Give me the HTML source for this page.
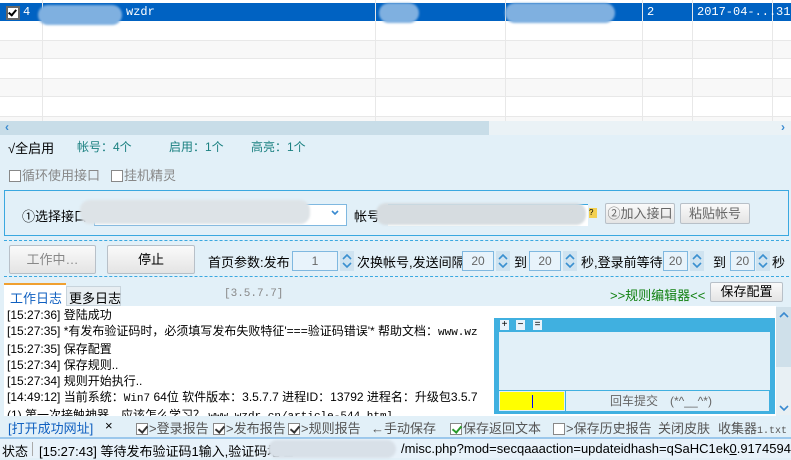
<!DOCTYPE html>
<html><head><meta charset="utf-8"><style>
*{margin:0;padding:0;box-sizing:border-box}
body{width:791px;height:458px;overflow:hidden;background:#e2f0f8;font-family:"Liberation Sans","Noto Sans CJK SC",sans-serif;font-size:12px;color:#000;position:relative}
.a{position:absolute;white-space:nowrap}
.mono{font-family:"Liberation Mono","Noto Sans CJK SC",monospace}
.btn{position:absolute;background:linear-gradient(#fafafa,#e4e4e4);border:1px solid #b8c0c8;border-radius:2px;text-align:center;font-size:13px}
.cb{display:inline-block;width:12px;height:12px;border:1px solid #888;background:#fff;vertical-align:-2px;margin-right:1px;position:relative}
.cb.c::after{content:"";position:absolute;left:3px;top:0px;width:4px;height:7px;border:solid #333;border-width:0 2px 2px 0;transform:rotate(40deg)}
.cb.g::after{border-color:#2a9a2a}
.in{position:absolute;background:#e8f3fb;border:1px solid #7fb8e0;text-align:center;color:#666;font-size:12px}
.sp{position:absolute;width:14px;height:20px;background:#cfe3f0}
.blur{position:absolute;border-radius:10px;filter:blur(1px)}
</style></head><body>
<svg width="0" height="0" style="position:absolute"><defs><symbol id="spn" viewBox="0 0 14 20"><path d="M3 8 L7 4 L11 8 M3 12 L7 16 L11 12" fill="none" stroke="#3a90d0" stroke-width="1.6"/></symbol></defs></svg>
<!-- table -->
<div class="a" style="left:0;top:0;width:791px;height:121px;background:#fff"></div>
<div class="a" style="left:0;top:3px;width:791px;height:18px;background:#0062c2"></div>
<div class="a" style="left:0;top:40px;width:791px;height:19px;background:#f8f8f8;border-top:1px solid #e8e8e8;border-bottom:1px solid #e8e8e8"></div>
<div class="a" style="left:0;top:78px;width:791px;height:19px;background:#f8f8f8;border-top:1px solid #e8e8e8;border-bottom:1px solid #e8e8e8"></div>
<div class="a" style="left:0;top:116px;width:791px;height:5px;background:#f8f8f8;border-top:1px solid #e8e8e8"></div>
<div class="a" style="left:42px;top:0;width:1px;height:121px;background:#e8e8e8"></div>
<div class="a" style="left:375px;top:0;width:1px;height:121px;background:#e8e8e8"></div>
<div class="a" style="left:505px;top:0;width:1px;height:121px;background:#e8e8e8"></div>
<div class="a" style="left:642px;top:0;width:1px;height:121px;background:#e8e8e8"></div>
<div class="a" style="left:692px;top:0;width:1px;height:121px;background:#e8e8e8"></div>
<div class="a" style="left:772px;top:0;width:1px;height:121px;background:#e8e8e8"></div>
<div class="a" style="left:6px;top:6px;width:14px;height:14px;background:#fff;border:2px solid #666"><div class="a" style="left:2px;top:0;width:5px;height:8px;border:solid #000;border-width:0 2px 2px 0;transform:rotate(40deg)"></div></div>
<div class="a mono" style="left:23px;top:5px;color:#fff;font-size:12px">4</div>
<div class="blur" style="left:38px;top:5px;width:84px;height:20px;background:#7fb0e0"></div>
<div class="a mono" style="left:126px;top:5px;color:#fff">wzdr</div>
<div class="blur" style="left:379px;top:3px;width:40px;height:20px;background:#7fb0e0"></div>
<div class="blur" style="left:505px;top:3px;width:110px;height:20px;background:#7fb0e0"></div>
<div class="a mono" style="left:647px;top:5px;color:#fff">2</div>
<div class="a mono" style="left:697px;top:5px;color:#fff">2017-04-...</div>
<div class="a mono" style="left:776px;top:5px;color:#fff">31</div>
<!-- hscroll -->
<div class="a" style="left:0;top:121px;width:791px;height:14px;background:#eaf2f6"></div>
<div class="a" style="left:0;top:121px;width:489px;height:14px;background:#c8dde8"></div>
<div class="a" style="left:5px;top:120px;color:#3a8ad0;font-size:12px;font-weight:bold">‹</div>
<div class="a" style="left:781px;top:120px;color:#3a8ad0;font-size:12px;font-weight:bold">›</div>
<!-- stats -->
<div class="a" style="left:8px;top:138px;font-size:13px">√全启用</div>
<div class="a" style="left:77px;top:138px;color:#1a8080;font-size:12px">帐号：4个</div>
<div class="a" style="left:169px;top:138px;color:#1a8080">启用：1个</div>
<div class="a" style="left:251px;top:138px;color:#1a8080">高亮：1个</div>
<div class="a" style="left:9px;top:165px;color:#888;font-size:13px"><span class="cb"></span>循环使用接口</div>
<div class="a" style="left:111px;top:165px;color:#888;font-size:13px"><span class="cb"></span>挂机精灵</div>
<!-- box -->
<div class="a" style="left:4px;top:190px;width:785px;height:46px;border:1px solid #3aa8e0"></div>
<div class="a" style="left:22px;top:206px;font-size:13px">①选择接口</div>
<div class="a" style="left:94px;top:204px;width:253px;height:22px;background:#fff;border:1px solid #7fb8e0"></div>
<div class="blur" style="left:80px;top:200px;width:230px;height:24px;background:#dde3e7"></div>
<svg class="a" style="left:331px;top:210px" width="8" height="6"><path d="M1 1 L4 4 L7 1" fill="none" stroke="#3a8ad0" stroke-width="1.6"/></svg>
<div class="a" style="left:354px;top:206px;font-size:13px">帐号</div>
<div class="a" style="left:388px;top:204px;width:200px;height:22px;background:#fff;border-top:1px solid #3aa8e0"></div>
<div class="blur" style="left:376px;top:203px;width:210px;height:22px;background:#d6dce0"></div>
<div class="a" style="left:589px;top:208px;width:8px;height:10px;background:#f3d050;font-size:8px;line-height:10px">?</div>
<div class="btn" style="left:605px;top:203px;width:70px;height:21px;line-height:19px;color:#666">②加入接口</div>
<div class="btn" style="left:680px;top:203px;width:70px;height:21px;line-height:19px;color:#666">粘贴帐号</div>
<div class="a" style="left:4px;top:240px;width:785px;border-top:1px dashed #3aa8e0"></div>
<div class="a" style="left:4px;top:276px;width:785px;border-top:1px dashed #3aa8e0"></div>
<div class="btn" style="left:9px;top:245px;width:87px;height:29px;line-height:27px;color:#888">工作中…</div>
<div class="btn" style="left:107px;top:245px;width:88px;height:29px;line-height:27px">停止</div>
<div class="a" style="left:208px;top:252px;font-size:13px">首页参数:发布</div>
<div class="in" style="left:292px;top:251px;width:46px;height:20px;line-height:18px">1</div>
<svg class="sp" style="left:340px;top:251px"><use href="#spn"/></svg>
<div class="a" style="left:357px;top:252px;font-size:13px">次换帐号,发送间隔</div>
<div class="in" style="left:462px;top:251px;width:32px;height:20px;line-height:18px">20</div>
<svg class="sp" style="left:496px;top:251px"><use href="#spn"/></svg>
<div class="a" style="left:514px;top:252px;font-size:13px">到</div>
<div class="in" style="left:529px;top:251px;width:32px;height:20px;line-height:18px">20</div>
<svg class="sp" style="left:563px;top:251px"><use href="#spn"/></svg>
<div class="a" style="left:581px;top:252px;font-size:13px">秒,登录前等待</div>
<div class="in" style="left:663px;top:251px;width:25px;height:20px;line-height:18px">20</div>
<svg class="sp" style="left:690px;top:251px"><use href="#spn"/></svg>
<div class="a" style="left:713px;top:252px;font-size:13px">到</div>
<div class="in" style="left:730px;top:251px;width:25px;height:20px;line-height:18px">20</div>
<svg class="sp" style="left:756px;top:251px"><use href="#spn"/></svg>
<div class="a" style="left:772px;top:252px;font-size:13px">秒</div>
<!-- tabs -->
<div class="a" style="left:4px;top:283px;width:62px;height:24px;background:#fff;border-top:2px solid #f0a030;color:#1060c0;font-size:13px;padding:3px 0 0 6px">工作日志</div>
<div class="a" style="left:66px;top:286px;width:55px;height:20px;background:#e8eef2;border:1px solid #c8d4dc;font-size:13px;padding:1px 0 0 2px">更多日志</div>
<div class="a mono" style="left:224px;top:288px;color:#888;font-size:11px">[3.5.7.7]</div>
<div class="a" style="left:610px;top:285px;color:#108010;font-size:13px">&gt;&gt;规则编辑器&lt;&lt;</div>
<div class="btn" style="left:710px;top:282px;width:73px;height:20px;line-height:18px">保存配置</div>
<!-- log -->
<div class="a" style="left:4px;top:306px;width:772px;height:110px;background:#fff;overflow:hidden">
<div class="a" style="left:3px;top:1px;font-size:12px;line-height:16px">[15:27:36] 登陆成功<br>[15:27:35] *有发布验证码时，必须填写发布失败特征'===验证码错误'* 帮助文档：<span class="mono" style="font-size:11px">www.wz</span><br>[15:27:35] 保存配置<br>[15:27:34] 保存规则..<br>[15:27:34] 规则开始执行..<br>[14:49:12] 当前系统：<span class="mono" style="font-size:11px">Win7</span> 64位 软件版本：3.5.7.7 进程ID：13792 进程名：升级包3.5.7<br>(1) 第一次接触神器，应该怎么学习？ <span class="mono" style="font-size:11px">www.wzdr.cn/article-544.html</span></div>
</div>
<div class="a" style="left:776px;top:307px;width:15px;height:108px;background:#e8f0f4"></div>
<div class="a" style="left:776px;top:307px;width:15px;height:60px;background:#cfe0ea"></div>
<svg class="a" style="left:778px;top:311px" width="12" height="8"><path d="M2 6 L6 2 L10 6" fill="none" stroke="#3a8ad0" stroke-width="1.6"/></svg>
<svg class="a" style="left:778px;top:404px" width="12" height="8"><path d="M2 2 L6 6 L10 2" fill="none" stroke="#3a8ad0" stroke-width="1.6"/></svg>
<!-- popup -->
<div class="a" style="left:494px;top:318px;width:281px;height:96px;background:#40b0e0"></div>
<div class="a" style="left:500px;top:320px;width:9px;height:10px;background:#e8f3fb;font-size:10px;line-height:10px;text-align:center">+</div>
<div class="a" style="left:516px;top:320px;width:9px;height:10px;background:#e8f3fb;font-size:10px;line-height:10px;text-align:center">−</div>
<div class="a" style="left:533px;top:320px;width:9px;height:10px;background:#e8f3fb;font-size:10px;line-height:10px;text-align:center">=</div>
<div class="a" style="left:499px;top:332px;width:271px;height:58px;background:#e2f0f8"></div>
<div class="a" style="left:499px;top:391px;width:66px;height:20px;background:#ff0;border:1px solid #e2f0f8"><div class="a" style="left:32px;top:3px;width:1px;height:13px;background:#00f"></div></div>
<div class="a" style="left:566px;top:391px;width:203px;height:20px;background:#e2f0f8;color:#666;font-size:12px;line-height:20px;padding-left:44px">回车提交　(*^__^*)</div>
<!-- options -->
<div class="a" style="left:0;top:416px;width:791px;height:21px;background:#e2f0f8"></div>
<div class="a" style="left:8px;top:418px;color:#1060c0;font-size:13px">[打开成功网址]</div>
<div class="a" style="left:105px;top:418px;font-size:13px">×</div>
<div class="a" style="left:136px;top:418px;color:#555;font-size:13px"><span class="cb c"></span>&gt;登录报告</div>
<div class="a" style="left:213px;top:418px;color:#555;font-size:13px"><span class="cb c"></span>&gt;发布报告</div>
<div class="a" style="left:288px;top:418px;color:#555;font-size:13px"><span class="cb c"></span>&gt;规则报告</div>
<div class="a" style="left:371px;top:418px;color:#555;font-size:13px">←手动保存</div>
<div class="a" style="left:450px;top:418px;color:#555;font-size:13px"><span class="cb c g"></span>保存返回文本</div>
<div class="a" style="left:553px;top:418px;color:#555;font-size:13px"><span class="cb"></span>&gt;保存历史报告</div>
<div class="a" style="left:658px;top:418px;color:#555;font-size:13px">关闭皮肤</div>
<div class="a" style="left:718px;top:418px;color:#555;font-size:13px">收集器<span class="mono" style="font-size:10px">1.txt</span></div>
<!-- status -->
<div class="a" style="left:0;top:437px;width:791px;height:21px;background:#e8f2fa;border-top:2px solid #9cc8ec"></div>
<div class="a" style="left:2px;top:441px;font-size:13px">状态</div>
<div class="a" style="left:32px;top:442px;width:1px;height:14px;background:#aaa"></div>
<div class="a" style="left:39px;top:441px;font-size:13px">[15:27:43] 等待发布验证码1输入,验证码地址</div>
<div class="blur" style="left:268px;top:440px;width:128px;height:18px;background:#d8e0e8"></div>
<div class="a" style="left:401px;top:441px;font-size:13px">/misc.php?mod=secqaaaction=updateidhash=qSaHC1ek<u>0</u>.9174594</div>
</body></html>
